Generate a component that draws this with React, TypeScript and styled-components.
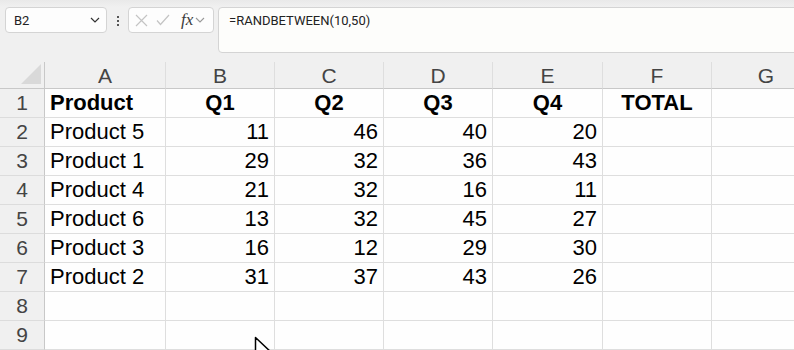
import React from 'react';
import styled, { createGlobalStyle } from 'styled-components';

const GlobalStyle = createGlobalStyle`
    html, body {
        margin: 0;
        padding: 0;
        background: #f0f0f0;
        overflow: hidden;
    }
    * {
        box-sizing: border-box;
    }
`;

const Page = styled.div`
    position: relative;
    width: 794px;
    height: 350px;
    overflow: hidden;
    background: #f0f0f0;
    font-family: "Liberation Sans", Arial, sans-serif;
`;

// Formula bar
const FormulaBar = styled.div`
    display: flex;
    align-items: flex-start;
    height: 52px;
    padding: 7px 0 0 5px;
    background: linear-gradient(#e9e9e9 0px, #f0f0f0 7px);
`;

const NameBox = styled.div`
    display: flex;
    align-items: center;
    justify-content: space-between;
    width: 102px;
    height: 26px;
    padding: 0 6px 0 8px;
    background: #fdfdfd;
    border: 1px solid #d4d4d4;
    border-radius: 4px;
    font-family: Roboto, "Liberation Sans", sans-serif;
    font-size: 13px;
    color: #222;
`;

const Kebab = styled.div`
    display: flex;
    flex-direction: column;
    align-items: center;
    justify-content: center;
    gap: 2px;
    width: 21px;
    height: 26px;
    padding-top: 1px;
`;

const Dot = styled.span`
    width: 2px;
    height: 2px;
    background: #555;
`;

const FxGroup = styled.div`
    display: flex;
    align-items: center;
    width: 86px;
    height: 26px;
    padding-left: 6px;
    gap: 8px;
    background: #fdfdfd;
    border: 1px solid #d4d4d4;
    border-radius: 4px;
`;

const FxLabel = styled.span`
    display: flex;
    align-items: center;
    margin-left: 3px;
    font-family: "Liberation Serif", "Times New Roman", serif;
    font-style: italic;
    font-size: 17px;
    color: #3a3a3a;
    gap: 2px;
`;

const FormulaInput = styled.div`
    flex: 1;
    height: 46px;
    margin-left: 4px;
    margin-right: -10px;
    padding: 3px 0 0 10px;
    background: #fdfdfb;
    border: 1px solid #d4d4d4;
    border-radius: 4px;
    font-family: Roboto, "Liberation Sans", sans-serif;
    font-size: 13px;
    line-height: 20px;
    color: #222;
`;

// Sheet grid: row header + columns A..G
const Sheet = styled.div`
    display: grid;
    grid-template-columns: 45px 121px 109px 109px 109px 110px 109px 109px;
    grid-template-rows: 27px;
    grid-auto-rows: 29px;
    margin-top: 10px;
`;

const Corner = styled.div`
    display: flex;
    align-items: flex-end;
    justify-content: flex-end;
    padding: 0 3px 4px 0;
    border-right: 1px solid #c8c8c8;
    border-bottom: 1px solid #c8c8c8;
`;

const CornerMark = styled.div`
    width: 20px;
    height: 20px;
    background: #d9d9d9;
    clip-path: polygon(100% 0, 100% 100%, 0 100%);
`;

const ColHead = styled.div`
    display: flex;
    align-items: center;
    justify-content: center;
    padding-top: 1px;
    border-bottom: 1px solid #c8c8c8;
    border-right: 1px solid #dedede;
    font-size: 21px;
    color: #444;
`;

const RowHead = styled.div`
    display: flex;
    align-items: center;
    justify-content: center;
    border-right: 1px solid #c8c8c8;
    border-bottom: 1px solid #dcdcdc;
    font-size: 21px;
    color: #444;
`;

const Cell = styled.div<{ $align?: 'left' | 'center' | 'right'; $bold?: boolean }>`
    display: flex;
    align-items: center;
    justify-content: ${p =>
        p.$align === 'right' ? 'flex-end' : p.$align === 'center' ? 'center' : 'flex-start'};
    padding: 0 5px 0 5px;
    background: #fefefe;
    border-right: 1px solid #dedede;
    border-bottom: 1px solid #dedede;
    font-size: 22px;
    font-weight: ${p => (p.$bold ? 700 : 400)};
    color: #000;
    white-space: nowrap;
    overflow: hidden;
`;

const Cursor = styled.svg`
    position: absolute;
    left: 254px;
    top: 336px;
`;

const columns = ['A', 'B', 'C', 'D', 'E', 'F', 'G'];
const headers = ['Q1', 'Q2', 'Q3', 'Q4'];

const data: [string, number, number, number, number][] = [
    ['Product 5', 11, 46, 40, 20],
    ['Product 1', 29, 32, 36, 43],
    ['Product 4', 21, 32, 16, 11],
    ['Product 6', 13, 32, 45, 27],
    ['Product 3', 16, 12, 29, 30],
    ['Product 2', 31, 37, 43, 26],
];

const App: React.FC = () => {
    return (
        <>
            <GlobalStyle />
            <Page>
                <FormulaBar>
                    <NameBox>
                        <span>B2</span>
                        <svg width="10" height="6" viewBox="0 0 10 6">
                            <path d="M1 1 L5 5 L9 1" fill="none" stroke="#333" strokeWidth="1.2" />
                        </svg>
                    </NameBox>
                    <Kebab>
                        <Dot />
                        <Dot />
                        <Dot />
                    </Kebab>
                    <FxGroup>
                        <svg width="13" height="13" viewBox="0 0 13 13">
                            <path d="M1 1 L12 12 M12 1 L1 12" stroke="#c4c4c4" strokeWidth="1.2" />
                        </svg>
                        <svg width="14" height="12" viewBox="0 0 14 12">
                            <path d="M1 6.5 L4.5 10.5 L13 1" fill="none" stroke="#c4c4c4" strokeWidth="1.2" />
                        </svg>
                        <FxLabel>
                            fx
                            <svg width="10" height="6" viewBox="0 0 10 6">
                                <path d="M1 1 L5 5 L9 1" fill="none" stroke="#999" strokeWidth="1.1" />
                            </svg>
                        </FxLabel>
                    </FxGroup>
                    <FormulaInput>=RANDBETWEEN(10,50)</FormulaInput>
                </FormulaBar>

                <Sheet>
                    <Corner>
                        <CornerMark />
                    </Corner>
                    {columns.map(c => (
                        <ColHead key={c}>{c}</ColHead>
                    ))}

                    <RowHead>1</RowHead>
                    <Cell $bold>Product</Cell>
                    {headers.map(h => (
                        <Cell key={h} $bold $align="center">{h}</Cell>
                    ))}
                    <Cell $bold $align="center">TOTAL</Cell>
                    <Cell />

                    {data.map((row, r) => (
                        <React.Fragment key={row[0]}>
                            <RowHead>{r + 2}</RowHead>
                            <Cell>{row[0]}</Cell>
                            {row.slice(1).map((v, i) => (
                                <Cell key={i} $align="right">{v}</Cell>
                            ))}
                            <Cell />
                            <Cell />
                        </React.Fragment>
                    ))}

                    {[8, 9].map(n => (
                        <React.Fragment key={n}>
                            <RowHead>{n}</RowHead>
                            {columns.map(c => (
                                <Cell key={c} />
                            ))}
                        </React.Fragment>
                    ))}
                </Sheet>

                <Cursor width="22" height="30" viewBox="0 0 22 30">
                    <path d="M1.5 1.5 L1.5 25 L7 20 L11 28.5 L15 27 L11 18.5 L19.5 18.5 Z" fill="#fff" stroke="#000" strokeWidth="1.5" strokeLinejoin="round" />
                </Cursor>
            </Page>
        </>
    );
};

export default App;
